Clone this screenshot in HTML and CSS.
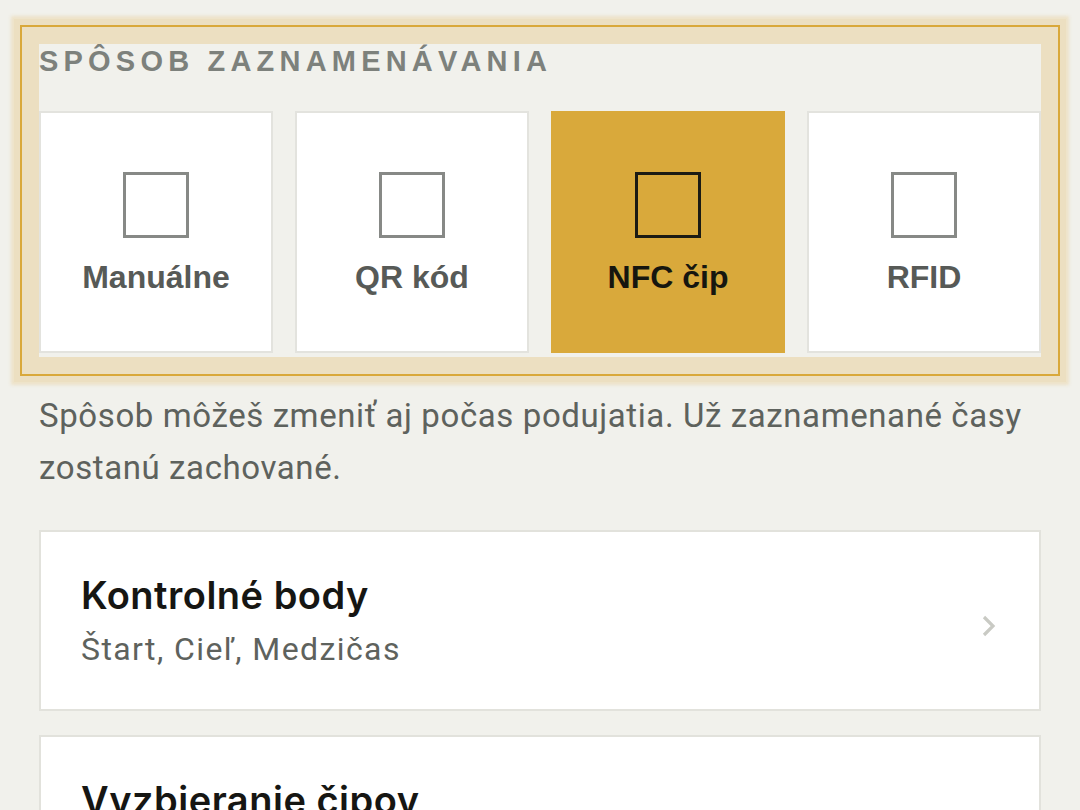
FILE: index.html
```html
<!DOCTYPE html>
<html lang="sk">
<head>
<meta charset="utf-8">
<title>Spôsob zaznamenávania</title>
<link rel="stylesheet" href="styles.css">
</head>
<body>
<main class="page">
  <section class="method">
    <h2 class="method-label">SPÔSOB ZAZNAMENÁVANIA</h2>
    <div class="options">
      <div class="option">
        <span class="option-icon"></span>
        <span class="option-name">Manuálne</span>
      </div>
      <div class="option">
        <span class="option-icon"></span>
        <span class="option-name">QR kód</span>
      </div>
      <div class="option option-selected">
        <span class="option-icon"></span>
        <span class="option-name">NFC čip</span>
      </div>
      <div class="option">
        <span class="option-icon"></span>
        <span class="option-name">RFID</span>
      </div>
    </div>
  </section>

  <p class="hint">Spôsob môžeš zmeniť aj počas podujatia. Už zaznamenané časy zostanú zachované.</p>

  <div class="rows">
    <a class="row" href="#">
      <span class="row-text">
        <span class="row-title">Kontrolné body</span>
        <span class="row-sub">Štart, Cieľ, Medzičas</span>
      </span>
      <svg class="chevron" viewBox="0 0 16 22" width="16" height="22" aria-hidden="true"><polyline points="3,2 12,11 3,20" fill="none" stroke="currentColor" stroke-width="3.2"/></svg>
    </a>
    <a class="row" href="#">
      <span class="row-text">
        <span class="row-title">Vyzbieranie čipov</span>
        <span class="row-sub">&nbsp;</span>
      </span>
      <svg class="chevron" viewBox="0 0 16 22" width="16" height="22" aria-hidden="true"><polyline points="3,2 12,11 3,20" fill="none" stroke="currentColor" stroke-width="3.2"/></svg>
    </a>
  </div>
</main>
</body>
</html>
```

FILE: styles.css
```css
* { box-sizing: border-box; }

html, body {
  margin: 0;
  padding: 0;
  background: #f1f1ec;
  overflow: hidden;
}

.page {
  padding: 44px 39px 0 39px;
  font-family: Roboto, "Noto Sans", sans-serif;
}

.method {
  background: #f1f1ec;
  outline: 2px solid #d9a83a;
  outline-offset: 17px;
  box-shadow: 0 0 0 25px #ecdfc1, 0 0 3px 28px rgba(236, 223, 193, 0.85);
  padding-bottom: 4px;
}

.method-label {
  margin: 0;
  padding-top: 1px;
  font-family: "Liberation Sans", Arial, sans-serif;
  font-weight: 700;
  font-size: 29px;
  line-height: 33px;
  letter-spacing: 5.2px;
  color: #7d817c;
}

.options {
  margin-top: 33px;
  display: grid;
  grid-template-columns: repeat(4, 1fr);
  gap: 22px;
}

.option {
  height: 242px;
  background: #fff;
  border: 2px solid #e3e3de;
  display: flex;
  flex-direction: column;
  align-items: center;
  justify-content: center;
  gap: 23px;
}

.option-icon {
  display: block;
  width: 66px;
  height: 66px;
  border: 3px solid #878986;
}

.option-name {
  font-family: "Liberation Sans", Arial, sans-serif;
  font-weight: 700;
  font-size: 32px;
  line-height: 32px;
  color: #575a57;
}

.option-selected {
  background: #d9a93b;
  border-color: #d9a93b;
}

.option-selected .option-icon {
  border-color: #1b1b14;
}

.option-selected .option-name {
  color: #16160f;
}

.hint {
  margin: 33px 0 0 0;
  font-size: 33px;
  line-height: 52px;
  letter-spacing: 0.6px;
  font-weight: 400;
  color: #5e625d;
}

.rows {
  margin-top: 36px;
  display: flex;
  flex-direction: column;
  gap: 24px;
}

.row {
  display: flex;
  align-items: center;
  justify-content: space-between;
  background: #fff;
  border: 2px solid #e2e2dc;
  padding: 41px 42px 40px 40px;
  text-decoration: none;
}

.row-text {
  display: flex;
  flex-direction: column;
}

.row-title {
  font-family: Inter, "Noto Sans", sans-serif;
  font-weight: 600;
  font-size: 38px;
  line-height: 44px;
  letter-spacing: 0.5px;
  color: #161613;
}

.row-sub {
  margin-top: 12px;
  font-size: 32px;
  line-height: 40px;
  letter-spacing: 1.4px;
  color: #5e625d;
}

.chevron {
  color: #c9cac4;
  margin-top: 10px;
}
```
